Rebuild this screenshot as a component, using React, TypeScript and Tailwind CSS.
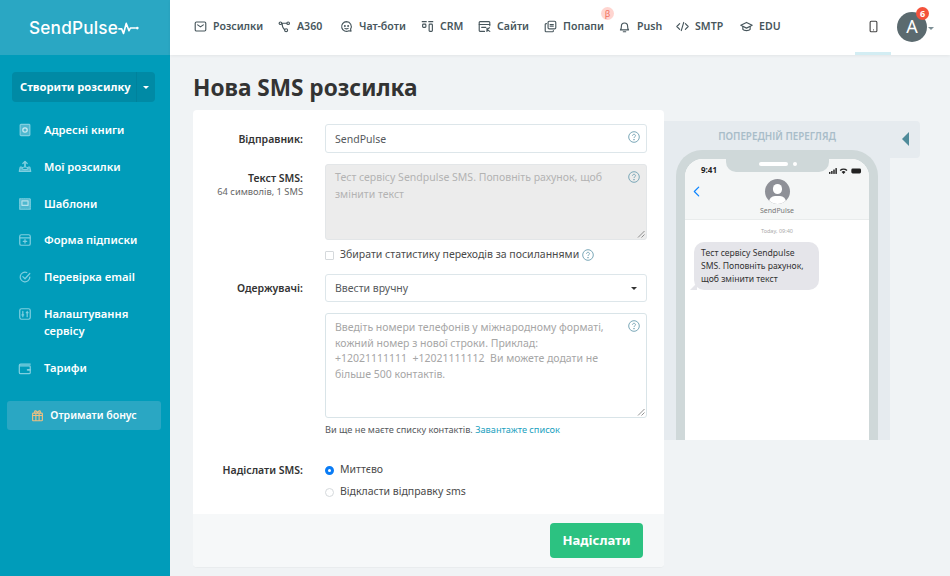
import React from "react";

const F = "font-['Noto_Sans','Open_Sans',sans-serif]";

type IP = { className?: string };
const S = ({ children, className = "w-[13px] h-[13px]" }: { children: React.ReactNode; className?: string }) => (
  <svg viewBox="0 0 16 16" fill="none" stroke="currentColor" strokeWidth="1.4" strokeLinecap="round" strokeLinejoin="round" className={className}>{children}</svg>
);

const nav = [
  { t: "Розсилки", w: "w-[84px]", i: <><rect x="1.5" y="2.5" width="13" height="11" rx="1.5" /><path d="M4.5 6l3.5 2.5L11.5 6" /></> },
  { t: "A360", w: "w-[62px]", i: <><circle cx="3" cy="4" r="1.6" /><circle cx="12.5" cy="4" r="1.6" /><circle cx="10" cy="12.5" r="1.8" /><path d="M4.6 4h6.3M5 4c0 4 2 7 3.2 8" /></> },
  { t: "Чат-боти", w: "w-[81px]", i: <><path d="M8 2a6 6 0 1 0 3 11.2l2.6.6-.6-2.6A6 6 0 0 0 8 2z" /><circle cx="6" cy="7.5" r=".5" /><circle cx="10" cy="7.5" r=".5" /><path d="M6 10.3c1.2.8 2.8.8 4 0" /></> },
  { t: "CRM", w: "w-[57px]", i: <><path d="M1.5 2h5M9.5 2h5" /><rect x="2" y="5" width="4" height="4" rx="1" /><rect x="10" y="5" width="4" height="9" rx="1" /></> },
  { t: "Сайти", w: "w-[66px]", i: <><path d="M14.5 7V3a1 1 0 0 0-1-1h-11a1 1 0 0 0-1 1v10a1 1 0 0 0 1 1H8" /><path d="M1.5 5.5h13M4.5 9h5" /><path d="M11 10v4M11 12l3-2.5M11.5 12l3 2" /></> },
  { t: "Попапи", w: "w-[74px]", i: <><rect x="5" y="1.5" width="9.5" height="9.5" rx="1.5" /><path d="M3 4.5h-.5a1 1 0 0 0-1 1v8a1 1 0 0 0 1 1h8a1 1 0 0 0 1-1V13" /><path d="M7.5 5.5h4M7.5 7.5h4" /></> },
  { t: "Push", w: "w-[58px]", i: <><path d="M3 12.2c1-1 1.2-2 1.2-4.7a3.8 3.8 0 0 1 7.6 0c0 2.7.2 3.7 1.2 4.7z" /><path d="M6.5 14.5h3" /></> },
  { t: "SMTP", w: "w-[64px]", i: <><path d="M4.5 4.5L1 8l3.5 3.5M11.5 4.5L15 8l-3.5 3.5M9.5 3l-3 10" /></> },
  { t: "EDU", w: "w-[50px]", i: <><path d="M8 3L1 6.5 8 10l7-3.5z" /><path d="M3.5 8v3.5c1.5 2 7.5 2 9 0V8" /></> },
];

const side = [
  { t: "Адресні книги", y: "mt-0", i: <><rect x="2.5" y="1.5" width="11" height="13" rx="1" fill="#4fb8cf" /><circle cx="8" cy="8" r="2.5" stroke="#cdeaf1" /></> },
  { t: "Мої розсилки", y: "mt-[19.75px]", i: <><path d="M8 2v7" strokeWidth="2" /><path d="M5.5 4L8 1.5 10.5 4" /><path d="M4 8H2.5L1.5 13h13l-1-5H12" fill="#4fb8cf" /><ellipse cx="8" cy="9.5" rx="3.5" ry="1.5" fill="#009cba" /></> },
  { t: "Шаблони", y: "mt-[19.75px]", i: <><rect x="2" y="2" width="12" height="12" fill="#4fb8cf" strokeDasharray="1.5 1" /><rect x="4.5" y="4.5" width="7" height="5" stroke="#b5e1ec" /></> },
  { t: "Форма підписки", y: "mt-[19.75px]", i: <><rect x="2" y="2" width="12" height="12" rx="1.8" /><path d="M2 5.5h12M8 7.5v4M6 9.5h4" /></> },
  { t: "Перевірка email", y: "mt-[19.75px]", i: <><path d="M13.5 8A5.5 5.5 0 1 1 10 2.9" /><path d="M5.5 7.5L8 10l5.5-6" /></> },
  { t: "Налаштування сервісу", y: "mt-[19.75px]", i: <><rect x="2" y="2" width="12" height="12" rx="2" /><path d="M5.5 5v6M10.5 5v6" /><path d="M4.5 9h2M9.5 6.5h2" /></> },
  { t: "Тарифи", y: "mt-[19.75px]", i: <><path d="M14 3.5H3a1.5 1.5 0 0 0-1.5 1.5v8A1.5 1.5 0 0 0 3 14.5h10a1 1 0 0 0 1-1v-7a1 1 0 0 0-1-1H1.5" /><path d="M11 10h3" strokeWidth="2" /></> },
];

const Help = ({ className = "absolute right-[6px] top-[6px]" }: IP) => (
  <svg viewBox="0 0 12 12" className={`w-3 h-3 text-[#7ba8b8] ${className}`} fill="none" stroke="currentColor">
    <circle cx="6" cy="6" r="5.3" strokeWidth="1" />
    <path d="M4.5 4.8c0-2 3-2 3 0 0 1-1.5 1-1.5 2.2" strokeWidth="1" />
    <circle cx="6" cy="8.7" r=".4" />
  </svg>
);

const Grip = () => (
  <svg viewBox="0 0 8 8" className="absolute right-[1px] bottom-[1px] w-2 h-2 text-[#777]" stroke="currentColor" strokeWidth=".8"><path d="M1 7.5L7.5 1M4.5 7.5L7.5 4.5" /></svg>
);

export default function App() {
  return (
    <div className={`${F} w-[950px] h-[576px] overflow-hidden flex bg-[#f0f3f5] text-[#333]`}>
      <aside className="w-[170px] shrink-0 bg-[#009cba] text-white flex flex-col">
        <div className="h-[55px] bg-[#2aa7c3] flex items-center pl-[29px]">
          <span className="font-['Inter',sans-serif] text-[17.2px] font-medium tracking-[0.2px] leading-none">SendPulse</span>
          <svg viewBox="0 0 24 14" className="w-[22px] h-[14px]" fill="none" stroke="white" strokeWidth="1.8" strokeLinecap="round" strokeLinejoin="round"><path d="M1 8h3l2 5 3-11 3 8 1.5-3H19" /><circle cx="21" cy="7" r="1.5" fill="white" stroke="none" /></svg>
        </div>
        <div className="mt-[17px] mx-[12px] h-[30px] w-[143px] rounded-[4px] bg-[#008aa5] flex items-center">
          <span className="flex-1 pl-[8px] text-[11.2px] font-bold whitespace-nowrap">Створити розсилку</span>
          <span className="w-[19px] h-full border-l border-[#00829c] flex items-center justify-center"><span className="w-0 h-0 border-x-[3px] border-x-transparent border-t-[3px] border-t-white" /></span>
        </div>
        <div className="mt-[19px] flex flex-col">
          {side.map((s) => (
            <div key={s.t} className={`flex items-start pl-[18px] ${s.y}`}>
              <S className="w-[14px] h-[14px] mt-[2px] text-[#7fcfe0] shrink-0">{s.i}</S>
              <span className="ml-[12px] w-[110px] text-[11.2px] font-semibold leading-[17px] text-white">{s.t}</span>
            </div>
          ))}
        </div>
        <div className="mt-[25px] mx-[7px] w-[154px] h-[29px] rounded-[3px] bg-[#2aa7c3] flex items-center justify-center gap-[6px] pt-[1px]">
          <svg viewBox="0 0 16 16" className="w-[13px] h-[13px] text-[#f0c080]" fill="none" stroke="currentColor" strokeWidth="1.4"><rect x="2" y="5" width="12" height="9.5" rx="1" /><path d="M2 8h12M6 5v9.5M10 5v9.5M5 5c-2-3 2-4 3 0 1-4 5-3 3 0" /></svg>
          <span className="text-[10.5px] font-semibold whitespace-nowrap">Отримати бонус</span>
        </div>
      </aside>

      <div className="flex-1 flex flex-col min-w-0">
        <header className="h-[55px] shrink-0 bg-white shadow-[0_1px_3px_rgba(0,0,0,0.06)] flex items-center pl-[24px] pb-[2px] text-[#47565c] relative">
          {nav.map((n) => (
            <div key={n.t} className={`${n.w} flex items-center shrink-0 relative`}>
              <S className="w-[13px] h-[13px] shrink-0">{n.i}</S>
              <span className="ml-[6px] text-[10.6px] font-semibold whitespace-nowrap">{n.t}</span>
              {n.t === "Попапи" && <span className="absolute left-[57px] -top-[12px] w-[13px] h-[13px] rounded-full bg-[#ffd5d0] text-[#f0705f] text-[9px] leading-[13px] text-center">β</span>}
            </div>
          ))}
          <div className="ml-[65px] w-[36px] self-stretch -mb-[2px] flex items-center justify-center border-b-[3px] border-[#d3edf3]">
            <svg viewBox="0 0 12 16" className="w-[9px] h-[13px] text-[#444]" fill="none" stroke="currentColor" strokeWidth="1.5"><rect x="1.5" y="1" width="9" height="14" rx="1.5" /><path d="M5.5 12.5h1" /></svg>
          </div>
          <div className="ml-[6px] relative w-[30px] h-[30px] rounded-full bg-[#5b6a6f] text-white flex items-center justify-center text-[18px]">
            A
            <span className="absolute -right-[2px] -top-[5px] w-[13px] h-[13px] rounded-full bg-[#f4523b] text-[9px] font-bold leading-[13px] text-center">6</span>
            <span className="absolute -right-[7px] top-[15px] w-0 h-0 border-x-[3px] border-x-transparent border-t-[3px] border-t-[#7d8f96]" />
          </div>
        </header>

        <main className="flex-1 min-h-0 pl-[23px]">
          <h1 className="mt-[16px] text-[22.6px] leading-[34px] font-bold text-[#333]">Нова SMS розсилка</h1>
          <div className="mt-[5px] flex items-start">
            <section className="w-[471px] h-[457px] bg-white rounded-[4px] flex flex-col shrink-0 shadow-[0_1px_1px_rgba(0,0,0,0.03)]">
              <div className="flex-1 pt-[14px] pl-[132px] pr-[17px] relative text-[10.5px]">
                <Row label="Відправник:" top="mt-[8px]">
                  <div className="relative h-[29px] border border-[#dde6ea] rounded-[3px] pl-[9px] pt-[2px] flex items-center text-[#55595c]">SendPulse<Help /></div>
                </Row>
                <div className="mt-[11px]">
                  <Row label="Текст SMS:" top="mt-[7px]" sub="64 символів, 1 SMS">
                    <div className="relative h-[76px] rounded-[3px] bg-[#ececec] border border-[#e3e6e8] pl-[9px] pr-[30px] pt-[4px] text-[#b3b3b3] leading-[17px]">
                      Тест сервісу Sendpulse SMS. Поповніть рахунок, щоб змінити текст<Help /><Grip />
                    </div>
                  </Row>
                </div>
                <div className="mt-[8px] h-[14px] flex items-center text-[#4a4a4a]">
                  <span className="w-[9px] h-[9px] border border-[#d5d9dc] rounded-[1px] bg-white" />
                  <span className="ml-[6px] whitespace-nowrap">Збирати статистику переходів за посиланнями</span>
                  <Help className="ml-[3px]" />
                </div>
                <div className="mt-[12px]">
                  <Row label="Одержувачі:" top="mt-[7px]">
                    <div className="relative h-[28px] border border-[#dde6ea] rounded-[3px] pl-[9px] pt-[2px] flex items-center text-[#55595c]">
                      Ввести вручну
                      <span className="absolute right-[9px] top-[12px] w-0 h-0 border-x-[3px] border-x-transparent border-t-[3px] border-t-[#333]" />
                    </div>
                  </Row>
                </div>
                <div className="mt-[11px] relative h-[105px] border border-[#d9e4e8] rounded-[3px] pl-[9px] pr-[30px] pt-[6px] text-[#a6a6a6] leading-[15.5px]">
                  Введіть номери телефонів у міжнародному форматі,<br />кожний номер з нової строки. Приклад:<br />+12021111111&nbsp; +12021111112&nbsp; Ви можете додати не<br />більше 500 контактів.<Help /><Grip />
                </div>
                <p className="mt-[5px] text-[9.2px] leading-[14px] text-[#55595c] whitespace-nowrap">Ви ще не маєте списку контактів. <span className="text-[#1a9fc0]">Завантажте список</span></p>
                <div className="mt-[25px] flex">
                  <span className="absolute left-[0px] w-[110px] text-right font-semibold text-[#333] leading-[16px]">Надіслати SMS:</span>
                  <div className="flex flex-col gap-[6px] text-[#4a4a4a]">
                    <div className="h-[16px] flex items-center"><span className="w-[9px] h-[9px] rounded-full border-[3px] border-[#0a7cf5] bg-white" /><span className="ml-[6px]">Миттєво</span></div>
                    <div className="h-[16px] flex items-center"><span className="w-[9px] h-[9px] rounded-full border border-[#d5d9dc] bg-white" /><span className="ml-[6px]">Відкласти відправку sms</span></div>
                  </div>
                </div>
              </div>
              <div className="h-[53px] bg-[#f6f8f9] rounded-b-[4px] flex items-center justify-end pr-[21px]">
                <button className="w-[93px] h-[35px] rounded-[4px] bg-[#2cc281] text-white text-[13px] font-bold">Надіслати</button>
              </div>
            </section>

            <section className="mt-[11px] flex flex-col items-start">
              <div className="w-[256px] h-[37px] bg-[#e6ebef] rounded-r-[4px] flex items-center relative">
                <span className="w-[226px] text-center text-[9.8px] font-semibold text-[#a9bdc9] -mt-[4px] whitespace-nowrap">ПОПЕРЕДНІЙ ПЕРЕГЛЯД</span>
                <span className="absolute left-[238px] top-[11px] w-0 h-0 border-y-[7px] border-y-transparent border-r-[7px] border-r-[#4f8b9a]" />
              </div>
              <div className="w-[226px] h-[282px] bg-[#e6ebef] pl-[12px]">
                <div className="-mt-[8px] relative w-[202px] h-[290px] bg-[#cfd8d9] rounded-t-[26px] pt-[9px] px-[9px]">
                  <div className="bg-white h-full rounded-t-[18px] overflow-hidden flex flex-col">
                    <div className="h-[61px] shrink-0 bg-[#f4f6f6] border-b border-[#e9ecec] relative">
                      <span className="absolute left-[16px] top-[5px] text-[8px] font-bold text-[#222]">9:41</span>
                      <div className="absolute left-[41px] top-0 w-[103px] h-[13px] bg-[#cfd8d9] rounded-b-[10px] flex items-center justify-center gap-[5px] pb-[3px]">
                        <span className="w-[29px] h-[4px] rounded-full bg-white" />
                        <span className="w-[4px] h-[4px] rounded-full bg-white" />
                      </div>
                      <svg viewBox="0 0 34 8" className="absolute right-[7px] top-[8px] w-[33px] h-[8px]" fill="#222"><rect x="0" y="5" width="1.5" height="2" /><rect x="2.2" y="4" width="1.5" height="3" /><rect x="4.4" y="2.5" width="1.5" height="4.5" /><rect x="6.6" y="1" width="1.5" height="6" /><path d="M11 3a6 6 0 0 1 8 0l-1 1a4.5 4.5 0 0 0-6 0zM13 5a3 3 0 0 1 4 0l-2 2z" /><rect x="23" y="1.5" width="10" height="5" rx="1.5" /></svg>
                      <svg viewBox="0 0 8 12" className="absolute left-[8px] top-[27px] w-[7px] h-[11px]" fill="none" stroke="#0a84ff" strokeWidth="1.4" strokeLinecap="round" strokeLinejoin="round"><path d="M6.5 1L1.5 6l5 5" /></svg>
                      <div className="absolute left-[80px] top-[20px] w-[25px] h-[25px] rounded-full bg-[#8e9097] overflow-hidden">
                        <span className="absolute left-[8px] top-[5px] w-[9px] h-[10px] rounded-full bg-white" />
                        <span className="absolute left-[4px] top-[17px] w-[17px] h-[12px] rounded-full bg-white" />
                      </div>
                      <span className="absolute inset-x-0 top-[47px] text-center text-[7px] text-[#777]">SendPulse</span>
                    </div>
                    <div className="text-center text-[5.5px] text-[#aaa] mt-[7px]">Today, 09:40</div>
                    <div className="relative ml-[9px] mt-[7px] w-[125px] h-[48px] rounded-[10px] bg-[#e5e5ea] pl-[7px] pr-[12px] pt-[5px] text-[8.6px] leading-[12.7px] text-[#333]">
                      Тест сервісу Sendpulse SMS. Поповніть рахунок, щоб змінити текст
                      <span className="absolute -left-[4px] bottom-0 w-0 h-0 border-t-[7px] border-t-transparent border-r-[7px] border-r-[#e5e5ea]" />
                    </div>
                  </div>
                </div>
              </div>
            </section>
          </div>
        </main>
      </div>
    </div>
  );
}

function Row({ label, sub, top, children }: { label: string; sub?: string; top: string; children: React.ReactNode }) {
  return (
    <div className="relative">
      <div className={`absolute -left-[132px] w-[110px] text-right whitespace-nowrap ${top}`}>
        <div className="font-semibold text-[#333] leading-[14px]">{label}</div>
        {sub && <div className="text-[9.3px] text-[#666] leading-[13px]">{sub}</div>}
      </div>
      {children}
    </div>
  );
}
